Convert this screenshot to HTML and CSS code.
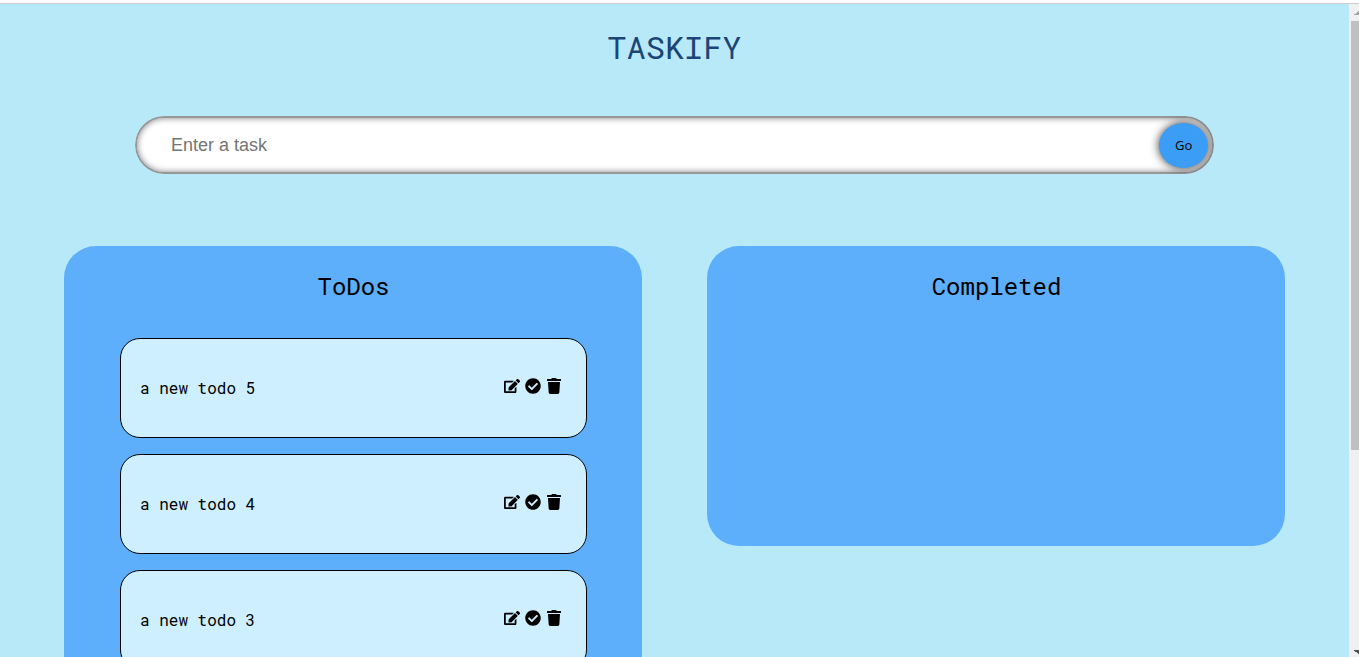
FILE: index.html
```html
<!DOCTYPE html>
<html lang="en">
<head>
<meta charset="utf-8">
<meta name="viewport" content="width=device-width, initial-scale=1">
<title>Taskify</title>
<link rel="stylesheet" href="styles.css">
</head>
<body>
<svg class="sprite" aria-hidden="true">
  <symbol id="edit" viewBox="0 0 576 512"><path d="M402.600 83.200l90.200 90.200c3.800 3.800 3.800 10 0 13.800L274.400 405.600l-92.800 10.300c-12.400 1.400-22.900-9.100-21.500-21.500l10.300-92.800L388.800 83.200c3.800-3.800 10-3.800 13.800 0zm162-22.900l-48.800-48.800c-15.200-15.200-39.900-15.200-55.200 0l-35.400 35.400c-3.800 3.800-3.800 10 0 13.800l90.200 90.200c3.800 3.800 10 3.800 13.800 0l35.400-35.400c15.200-15.300 15.200-40 0-55.200zM384 346.200V448H64V128h229.800c3.200 0 6.200-1.300 8.500-3.500l40-40c7.600-7.600 2.200-20.500-8.500-20.500H48C21.500 64 0 85.500 0 112v352c0 26.500 21.500 48 48 48h352c26.500 0 48-21.500 48-48V306.200c0-10.700-12.900-16-20.500-8.500l-40 40c-2.200 2.300-3.500 5.300-3.500 8.500z"/></symbol>
  <symbol id="check" viewBox="0 0 512 512"><path d="M504 256c0 136.967-111.033 248-248 248S8 392.967 8 256 119.033 8 256 8s248 111.033 248 248zM227.314 387.314l184-184c6.248-6.248 6.248-16.379 0-22.627l-22.627-22.627c-6.248-6.249-16.379-6.249-22.628 0L216 308.118l-70.059-70.059c-6.248-6.248-16.379-6.248-22.628 0l-22.627 22.627c-6.248 6.248-6.248 16.379 0 22.627l104 104c6.249 6.249 16.379 6.249 22.628.001z"/></symbol>
  <symbol id="trash" viewBox="0 0 448 512"><path d="M432 32H312l-9.400-18.700A24 24 0 0 0 281.100 0H166.800a23.720 23.720 0 0 0-21.400 13.300L136 32H16A16 16 0 0 0 0 48v32a16 16 0 0 0 16 16h416a16 16 0 0 0 16-16V48a16 16 0 0 0-16-16zM53.200 467a48 48 0 0 0 47.900 45h245.800a48 48 0 0 0 47.900-45L416 128H32z"/></symbol>
</svg>
<div class="window">
  <main class="page">
    <h1 class="title">TASKIFY</h1>
    <form class="task-form">
      <input class="task-input" type="text" placeholder="Enter a task" aria-label="Enter a task">
      <button class="go" type="button">Go</button>
    </form>
    <div class="lists">
      <section class="panel">
        <h2 class="panel-title">ToDos</h2>
        <ul class="todos">
          <li class="todo">
            <span class="todo-text">a new todo 5</span>
            <button class="action" type="button" aria-label="Edit"><svg class="icon"><use href="#edit"/></svg></button>
            <button class="action" type="button" aria-label="Complete"><svg class="icon"><use href="#check"/></svg></button>
            <button class="action" type="button" aria-label="Delete"><svg class="icon"><use href="#trash"/></svg></button>
          </li>
          <li class="todo">
            <span class="todo-text">a new todo 4</span>
            <button class="action" type="button" aria-label="Edit"><svg class="icon"><use href="#edit"/></svg></button>
            <button class="action" type="button" aria-label="Complete"><svg class="icon"><use href="#check"/></svg></button>
            <button class="action" type="button" aria-label="Delete"><svg class="icon"><use href="#trash"/></svg></button>
          </li>
          <li class="todo">
            <span class="todo-text">a new todo 3</span>
            <button class="action" type="button" aria-label="Edit"><svg class="icon"><use href="#edit"/></svg></button>
            <button class="action" type="button" aria-label="Complete"><svg class="icon"><use href="#check"/></svg></button>
            <button class="action" type="button" aria-label="Delete"><svg class="icon"><use href="#trash"/></svg></button>
          </li>
        </ul>
      </section>
      <section class="panel">
        <h2 class="panel-title">Completed</h2>
      </section>
    </div>
  </main>
  <div class="scrollbar" aria-hidden="true">
    <svg class="arrow" viewBox="0 0 10 17"><path fill="#a3a3a3" d="M5 11h5V7H9v1H8v1H7v1H5z"/></svg>
    <div class="thumb"></div>
    <svg class="arrow arrow-down" viewBox="0 0 10 17"><path fill="#505050" d="M5 10h5v4H9v-1H8v-1H6v-1H5z"/></svg>
  </div>
</div>
</body>
</html>
```
FILE: styles.css
```css
* {
  box-sizing: border-box;
}

body {
  margin: 0;
  background: #fff;
  color: #000;
  font-family: "Roboto Mono", "DejaVu Sans Mono", monospace;
}

.sprite {
  display: none;
}

.window {
  display: grid;
  grid-template-columns: 1fr 10px;
  height: 100vh;
  padding-top: 3px;
  overflow: hidden;
}

.page {
  display: flex;
  flex-direction: column;
  align-items: center;
  min-height: 0;
  overflow: hidden;
  border-top: 1px solid #ccc;
  background: #b8e9f8;
}

.title {
  flex: none;
  margin: 23px 0 49px;
  color: #1b4576;
  font-size: 32px;
  font-weight: 400;
  line-height: 40px;
}

.task-form {
  position: relative;
  flex: none;
  width: 80%;
  height: 58px;
  border-radius: 29px;
  overflow: hidden;
}

.task-input {
  display: block;
  width: 100%;
  height: 100%;
  padding: 0 80px 0 34px;
  border: 2px solid #979797;
  border-radius: 29px;
  outline: none;
  background: #fff;
  box-shadow: inset 0 0 6px #808080;
  font-family: "Liberation Sans", Arial, sans-serif;
  font-size: 18px;
}

.task-input::placeholder {
  color: #757575;
}

.go {
  position: absolute;
  top: 7px;
  right: 6px;
  width: 49px;
  height: 45px;
  padding: 0 0 1px;
  border: 0;
  border-radius: 50%;
  background: #3b9df5;
  box-shadow: 0 0 10px #333;
  color: #000;
  font-family: "Open Sans", sans-serif;
  font-size: 13px;
}

.lists {
  display: flex;
  flex: none;
  align-items: flex-start;
  gap: 65px;
  width: 100%;
  margin-top: 72px;
  padding: 0 64px;
}

.panel {
  flex: 1;
  min-height: 300px;
  padding: 24px 55px 24px 56px;
  border-radius: 32px;
  background: #5daffb;
}

.panel-title {
  margin: 0 0 36px;
  font-size: 24px;
  font-weight: 400;
  line-height: 32px;
  text-align: center;
}

.todos {
  display: grid;
  gap: 16px;
  margin: 0;
  padding: 0;
  list-style: none;
}

.todo {
  display: flex;
  align-items: center;
  gap: 5px;
  height: 100px;
  padding: 0 24px 0 19px;
  border: 1px solid #000;
  border-radius: 20px;
  background: #ceefff;
}

.todo-text {
  flex: 1;
  font-size: 16px;
  line-height: 20px;
}

.action {
  display: flex;
  padding: 0 0 4px;
  border: 0;
  background: none;
  color: #000;
}

.icon {
  width: 16px;
  height: 16px;
  fill: currentColor;
}

.scrollbar {
  display: flex;
  flex-direction: column;
  border-top: 1px solid #ccc;
  background: #f0f0f0;
}

.arrow {
  flex: none;
  width: 10px;
  height: 17px;
}

.thumb {
  height: 429px;
  margin-left: 2px;
  background: #c0c0c0;
}

.arrow-down {
  margin-top: auto;
}
```
